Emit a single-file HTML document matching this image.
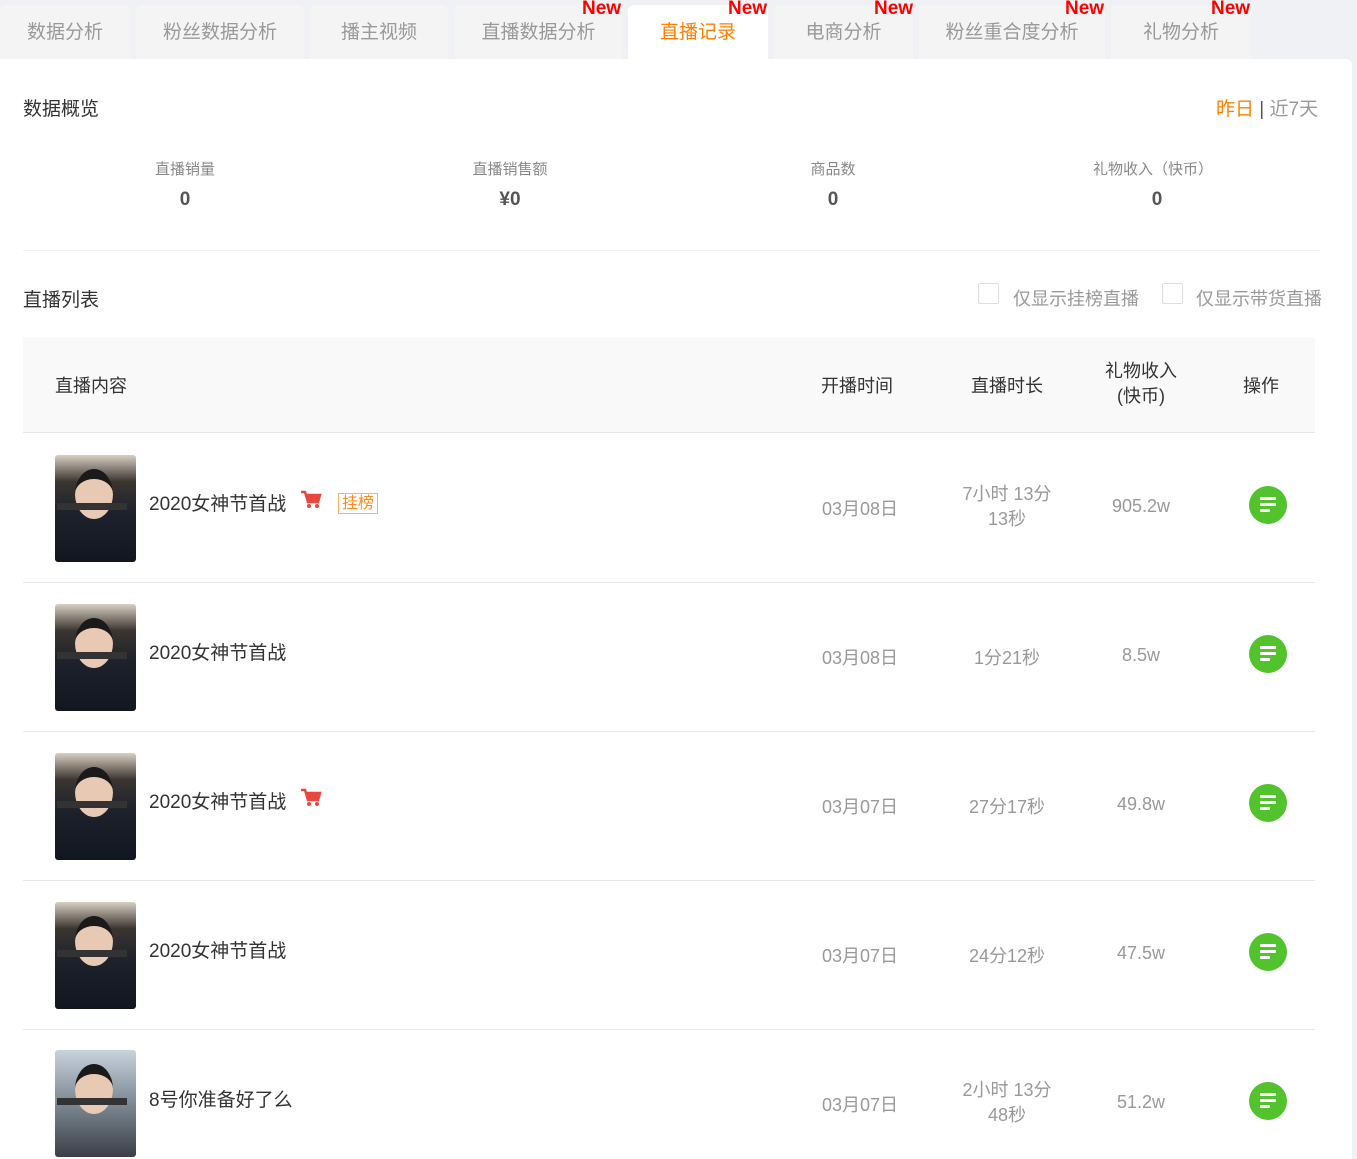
<!DOCTYPE html>
<html><head><meta charset="utf-8">
<style>
*{margin:0;padding:0;box-sizing:border-box}
body{width:1357px;height:1137px;overflow:hidden;background:#f0f1f4;font-family:"Liberation Sans","Noto Sans CJK SC",sans-serif;position:relative;color:#333}
.a{position:absolute;white-space:nowrap}
.tab{position:absolute;top:5px;height:54px;background:#f4f4f4;border-radius:6px 6px 0 0;color:#999;font-size:19px;text-align:center;line-height:56px}
.tab.on{background:#fff;color:#ff7f00}
.new{position:absolute;top:-6px;color:#f00;font-weight:bold;font-size:19px;line-height:20px}
.main{position:absolute;left:0;top:59px;width:1352px;height:1100px;background:#fff;border-radius:0 6px 0 0}
.c{text-align:center;transform:translateX(-50%)}
.lab{font-size:15px;color:#888;top:158px}
.val{font-size:19px;color:#555;font-weight:bold;top:189px}
.th{font-size:18px;color:#333}
.td{font-size:18px;color:#999;text-align:center;transform:translateX(-50%)}
.thumb{position:absolute;left:55px;width:81px;height:107px;border-radius:3px;background:linear-gradient(180deg,#d9cfc2 0%,#3a3530 25%,#1d212b 55%,#121620 100%)}
.thumb:before{content:"";position:absolute;left:20px;top:14px;width:38px;height:40px;border-radius:50%;background:#e8c9b3;border-top:10px solid #1a1a1a}
.thumb:after{content:"";position:absolute;left:2px;top:48px;width:70px;height:7px;background:#333}
.btn{position:absolute;left:1249px;width:38px;height:38px;border-radius:50%;background:#52c22d}
.btn i{position:absolute;left:11px;height:3px;background:#fff;border-radius:1px}
.line{position:absolute;left:23px;width:1292px;height:1px;background:#e8e8e8}
.title{font-size:19px;color:#333}
</style></head><body>
<div class="tab" style="left:0;width:130px">数据分析</div>
<div class="tab" style="left:136px;width:168px">粉丝数据分析</div>
<div class="tab" style="left:310px;width:138px">播主视频</div>
<div class="tab" style="left:455px;width:167px">直播数据分析<span class="new" style="left:127px">New</span></div>
<div class="tab on" style="left:628px;width:140px;height:60px">直播记录<span class="new" style="left:100px">New</span></div>
<div class="tab" style="left:774px;width:139px">电商分析<span class="new" style="left:100px">New</span></div>
<div class="tab" style="left:919px;width:186px">粉丝重合度分析<span class="new" style="left:146px">New</span></div>
<div class="tab" style="left:1111px;width:140px">礼物分析<span class="new" style="left:100px">New</span></div>
<div class="main"></div>

<div class="a" style="left:23px;top:94px;font-size:19px">数据概览</div>
<div class="a" style="left:1216px;top:94px;font-size:19px;color:#999"><span style="color:#ff8000">昨日</span> <span style="color:#555">|</span> 近7天</div>

<div class="a c lab" style="left:185px">直播销量</div>
<div class="a c lab" style="left:510px">直播销售额</div>
<div class="a c lab" style="left:833px">商品数</div>
<div class="a c lab" style="left:1153px">礼物收入（快币）</div>
<div class="a c val" style="left:185px">0</div>
<div class="a c val" style="left:510px">¥0</div>
<div class="a c val" style="left:833px">0</div>
<div class="a c val" style="left:1157px">0</div>
<div class="line" style="top:250px;left:23px;width:1297px;background:#f0f0f0"></div>

<div class="a" style="left:23px;top:285px;font-size:19px">直播列表</div>
<div class="a" style="left:978px;top:283px;width:21px;height:21px;border:1px solid #ddd;border-radius:2px"></div>
<div class="a" style="left:1013px;top:285px;font-size:18px;color:#999">仅显示挂榜直播</div>
<div class="a" style="left:1162px;top:283px;width:21px;height:21px;border:1px solid #ddd;border-radius:2px"></div>
<div class="a" style="left:1196px;top:285px;font-size:18px;color:#999">仅显示带货直播</div>

<div class="a" style="left:23px;top:337px;width:1292px;height:96px;background:#f9f9f9;border-bottom:1px solid #e8e8e8"></div>
<div class="a th" style="left:55px;top:372px">直播内容</div>
<div class="a th c" style="left:857px;top:372px">开播时间</div>
<div class="a th c" style="left:1007px;top:372px">直播时长</div>
<div class="a th c" style="left:1141px;top:359px;line-height:25px">礼物收入<br>(快币)</div>
<div class="a th c" style="left:1261px;top:372px">操作</div>

<div class="thumb" style="top:455px"></div>
<div class="a title" style="left:149px;top:489px">2020女神节首战</div>
<svg class="a" style="left:300px;top:490px" width="22" height="20" viewBox="0 0 22 20"><path d="M1 2h4l3 10h10l2-7H7" fill="none" stroke="#e8473e" stroke-width="2.5"/><path d="M7 5h13l-2 7H8z" fill="#e8473e"/><circle cx="9" cy="16" r="2" fill="#e8473e"/><circle cx="17" cy="16" r="2" fill="#e8473e"/></svg>
<div class="a" style="left:338px;top:493px;font-size:16px;color:#ff8a1f;border:1px solid #ffb066;padding:0 3px;line-height:19px">挂榜</div>
<div class="a td" style="left:860px;top:495px">03月08日</div>
<div class="a td" style="left:1007px;top:482px;line-height:25px">7小时 13分<br>13秒</div>
<div class="a td" style="left:1141px;top:496px">905.2w</div>
<div class="btn" style="top:486px"><i style="top:11px;width:16px"></i><i style="top:17px;width:16px"></i><i style="top:23px;width:10px"></i></div>
<div class="line" style="top:582px"></div>

<div class="thumb" style="top:604px"></div>
<div class="a title" style="left:149px;top:638px">2020女神节首战</div>
<div class="a td" style="left:860px;top:644px">03月08日</div>
<div class="a td" style="left:1007px;top:644px">1分21秒</div>
<div class="a td" style="left:1141px;top:645px">8.5w</div>
<div class="btn" style="top:635px"><i style="top:11px;width:16px"></i><i style="top:17px;width:16px"></i><i style="top:23px;width:10px"></i></div>
<div class="line" style="top:731px"></div>

<div class="thumb" style="top:753px"></div>
<div class="a title" style="left:149px;top:787px">2020女神节首战</div>
<svg class="a" style="left:300px;top:788px" width="22" height="20" viewBox="0 0 22 20"><path d="M1 2h4l3 10h10l2-7H7" fill="none" stroke="#e8473e" stroke-width="2.5"/><path d="M7 5h13l-2 7H8z" fill="#e8473e"/><circle cx="9" cy="16" r="2" fill="#e8473e"/><circle cx="17" cy="16" r="2" fill="#e8473e"/></svg>
<div class="a td" style="left:860px;top:793px">03月07日</div>
<div class="a td" style="left:1007px;top:793px">27分17秒</div>
<div class="a td" style="left:1141px;top:794px">49.8w</div>
<div class="btn" style="top:784px"><i style="top:11px;width:16px"></i><i style="top:17px;width:16px"></i><i style="top:23px;width:10px"></i></div>
<div class="line" style="top:880px"></div>

<div class="thumb" style="top:902px"></div>
<div class="a title" style="left:149px;top:936px">2020女神节首战</div>
<div class="a td" style="left:860px;top:942px">03月07日</div>
<div class="a td" style="left:1007px;top:942px">24分12秒</div>
<div class="a td" style="left:1141px;top:943px">47.5w</div>
<div class="btn" style="top:933px"><i style="top:11px;width:16px"></i><i style="top:17px;width:16px"></i><i style="top:23px;width:10px"></i></div>
<div class="line" style="top:1029px"></div>

<div class="thumb" style="top:1050px;background:linear-gradient(180deg,#c9d3dc 0%,#8b97a3 40%,#3a3f48 100%)"></div>
<div class="a title" style="left:149px;top:1085px">8号你准备好了么</div>
<div class="a td" style="left:860px;top:1091px">03月07日</div>
<div class="a td" style="left:1007px;top:1078px;line-height:25px">2小时 13分<br>48秒</div>
<div class="a td" style="left:1141px;top:1092px">51.2w</div>
<div class="btn" style="top:1082px"><i style="top:11px;width:16px"></i><i style="top:17px;width:16px"></i><i style="top:23px;width:10px"></i></div>
</body></html>
